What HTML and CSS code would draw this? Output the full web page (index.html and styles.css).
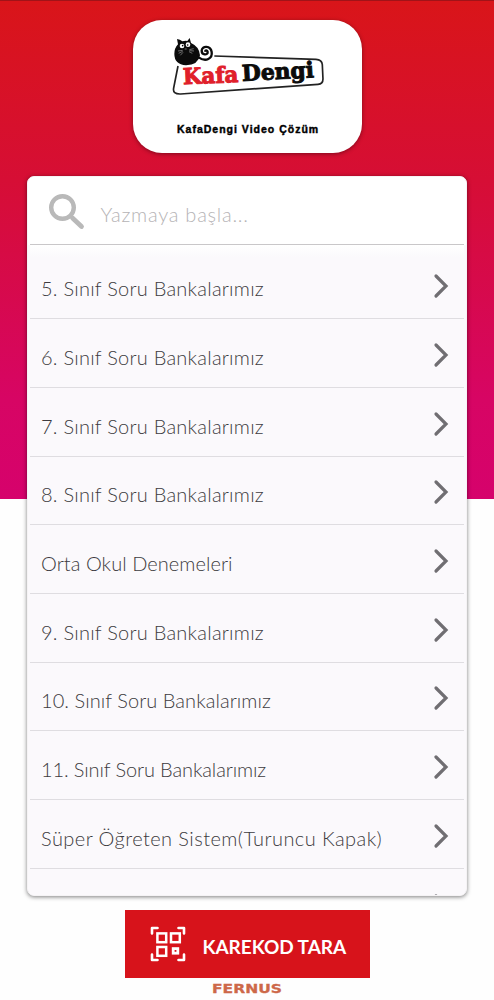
FILE: index.html
```html
<!DOCTYPE html>
<html lang="tr">
<head>
    <meta charset="UTF-8">
    <meta name="viewport" content="width=device-width, initial-scale=1.0">
    <title>KafaDengi Video Çözüm</title>
    <link rel="stylesheet" href="styles.css">
</head>
<body>
    <svg class="hidden">
        <symbol id="arrow" viewBox="0 0 16 26">
            <path d="M3 3 L13 13 L3 23" fill="none" stroke="#706e72" stroke-width="3.2" stroke-linecap="round" stroke-linejoin="miter"/>
        </symbol>
    </svg>

    <div class="logo-card">
        <svg class="logo" viewBox="150 75 470 185">
            <path d="M283 138 L588 148 Q606 149 607 164 L609 207 Q609 222 594 223 L182 252 Q157 253 161 234 L174 168" fill="none" stroke="#222" stroke-width="5"/>
            <!-- cat -->
            <path d="M174 103 L171 87 Q180 88 187 94 Q196 91 202 93 L209 84 L213 99 Q238 110 240 136 Q235 165 198 166 Q163 163 163 132 Q163 114 174 103 Z" fill="#0b0b0b"/>
            <path d="M236 142 C258 158 278 145 275 126 C272 107 246 106 245 122 C245 136 264 136 263 126 C262 120 256 120 255 125" fill="none" stroke="#0b0b0b" stroke-width="7"/>
            <circle cx="186" cy="108" r="7" fill="#fff"/>
            <circle cx="204" cy="104" r="7" fill="#fff"/>
            <circle cx="188" cy="107" r="2.5"/>
            <circle cx="203" cy="105" r="2.5"/>
            <path d="M188 121 L174 123 M188 124 L176 130 M189 127 L181 136 M208 119 L221 116 M208 122 L222 123 M207 125 L217 130 M194 117 L200 117" fill="none" stroke="#ccc" stroke-width="1.5"/>
            <text class="logo-red" x="190" y="223" textLength="166" lengthAdjust="spacingAndGlyphs" transform="rotate(-2.5 190 223)">Kafa</text>
            <text class="logo-black" x="367" y="213" textLength="216" lengthAdjust="spacingAndGlyphs" transform="rotate(-3 367 213)">Dengi</text>
        </svg>
        <div class="logo-title">KafaDengi Video Çözüm</div>
    </div>

    <div class="panel">
        <div class="search">
            <svg class="search-icon" viewBox="0 0 36 36">
                <circle cx="13.5" cy="13.5" r="11.3" fill="none" stroke="#b9b9b9" stroke-width="4.4"/>
                <path d="M23.5 24 L32.5 32.5" stroke="#b9b9b9" stroke-width="4.8" stroke-linecap="round"/>
            </svg>
            <span class="placeholder">Yazmaya başla...</span>
        </div>
        <div class="list">
            <div class="item"><span>5. Sınıf Soru Bankalarımız</span><svg class="arrow"><use href="#arrow"/></svg></div>
            <div class="item"><span>6. Sınıf Soru Bankalarımız</span><svg class="arrow"><use href="#arrow"/></svg></div>
            <div class="item"><span>7. Sınıf Soru Bankalarımız</span><svg class="arrow"><use href="#arrow"/></svg></div>
            <div class="item"><span>8. Sınıf Soru Bankalarımız</span><svg class="arrow"><use href="#arrow"/></svg></div>
            <div class="item tight"><span>Orta Okul Denemeleri</span><svg class="arrow"><use href="#arrow"/></svg></div>
            <div class="item"><span>9. Sınıf Soru Bankalarımız</span><svg class="arrow"><use href="#arrow"/></svg></div>
            <div class="item tight"><span>10. Sınıf Soru Bankalarımız</span><svg class="arrow"><use href="#arrow"/></svg></div>
            <div class="item tighter"><span>11. Sınıf Soru Bankalarımız</span><svg class="arrow"><use href="#arrow"/></svg></div>
            <div class="item wide"><span>Süper Öğreten Sistem(Turuncu Kapak)</span><svg class="arrow"><use href="#arrow"/></svg></div>
            <div class="item next"><svg class="arrow"><use href="#arrow"/></svg></div>
        </div>
    </div>

    <button class="scan">
        <svg class="qr" viewBox="0 0 36 36" fill="none" stroke="#fff">
            <path d="M2 7.5 V2 H7.5 M28.5 2 H34 V7.5 M34 28.5 V34 H28.5 M7.5 34 H2 V28.5" stroke-width="2.6" stroke-linecap="round" stroke-linejoin="round"/>
            <rect x="7.4" y="7.4" width="8.8" height="8.8" stroke-width="2.5"/>
            <rect x="21" y="7.4" width="8.8" height="8.8" stroke-width="2.5"/>
            <rect x="7.4" y="21" width="8.8" height="8.8" stroke-width="2.5"/>
            <rect x="23.2" y="22.6" width="4.6" height="4.6" stroke-width="2.8"/>
        </svg>
        <span>KAREKOD TARA</span>
    </button>
    <div class="brand">
        <svg viewBox="0 0 72 14"><text x="1" y="11.2" textLength="70" lengthAdjust="spacingAndGlyphs">FERNUS</text></svg>
    </div>
</body>
</html>
```

FILE: styles.css
```css
* {
    box-sizing: border-box;
}
body {
    margin: 0;
    height: 1000px;
    overflow: hidden;
    border-top: 1px solid #a11318;
    padding-top: 18px;
    display: flex;
    flex-direction: column;
    align-items: center;
    font-family: Lato, sans-serif;
    background: linear-gradient(#d91519 0, #d60e35 180px, #d70564 400px, #d6026c 499px) no-repeat #fefefe;
    background-size: 100% 499px;
}
.hidden {
    position: absolute;
    width: 0;
    height: 0;
}
.logo-card {
    width: 229px;
    height: 133px;
    flex: none;
    margin-top: 0.5px;
    background: #fff;
    border-radius: 29px;
    padding: 15.5px 0 0 37.5px;
    box-shadow: 0 1px 4px rgba(0, 0, 0, 0.4);
}
.logo {
    display: block;
    width: 156.67px;
    height: 61.67px;
}
.logo text {
    font-family: "DejaVu Serif", serif;
    font-weight: bold;
    font-size: 66px;
    stroke-width: 3;
}
.logo-red {
    fill: #e0202a;
    stroke: #e0202a;
}
.logo-black {
    fill: #0b0b0b;
    stroke: #0b0b0b;
}
.logo-title {
    margin: 25px 0 0 7px;
    font-family: "Liberation Sans", Arial, sans-serif;
    font-size: 10.5px;
    font-weight: bold;
    line-height: 14px;
    letter-spacing: 1px;
    color: #000;
    -webkit-text-stroke: 0.4px #000;
    white-space: nowrap;
}
.panel {
    width: 440px;
    height: 720px;
    flex: none;
    margin-top: 23.5px;
    background: #fbf9fc;
    border: 1px solid #f5f3f5;
    border-radius: 7px;
    box-shadow: 0 1px 4px rgba(0, 0, 0, 0.5);
    overflow: hidden;
}
.search {
    display: flex;
    height: 68px;
    margin: 0 2px;
    padding: 17px 0 0 19px;
    border-bottom: 1px solid #c9c7c9;
    background: #fff;
    box-shadow: 0 0 0 2px #fff;
    clip-path: inset(0 -3px);
}
.search-icon {
    width: 36px;
    height: 36px;
}
.placeholder {
    margin: 8px 0 0 15.5px;
    font-size: 20px;
    line-height: 24px;
    font-weight: 300;
    letter-spacing: 0.75px;
    color: #b5b3b5;
}
.list {
    margin: 0 2px;
    padding-top: 5.8px;
    background: linear-gradient(#fff, #fbf9fc 12px);
}
.item {
    display: flex;
    justify-content: space-between;
    height: 68.65px;
    padding: 0 15px 0 11px;
    border-bottom: 1px solid #dfdde1;
    font-size: 20px;
    font-weight: 300;
    line-height: 24px;
    letter-spacing: 0.24px;
    color: #3d3b40;
}
.item span {
    margin-top: 25.6px;
    white-space: nowrap;
}
.item.tight {
    letter-spacing: 0.06px;
}
.item.tighter {
    letter-spacing: -0.12px;
}
.item.wide {
    letter-spacing: 0.43px;
}
.arrow {
    width: 16px;
    height: 26px;
    margin-top: 22.6px;
}
.item.next {
    justify-content: flex-end;
    border-bottom: none;
}
.item.next .arrow {
    margin-top: 24px;
}
.scan {
    display: flex;
    flex: none;
    align-items: center;
    width: 245px;
    height: 68px;
    margin-top: 14px;
    padding: 0 0 0 25px;
    border: none;
    background: #d7131b;
    color: #fff;
    font-family: Lato, sans-serif;
    font-size: 19px;
    font-weight: bold;
}
.scan span {
    margin: 5px 0 0 17px;
    letter-spacing: -0.05px;
    white-space: nowrap;
}
.qr {
    width: 36px;
    height: 36px;
}
.brand {
    margin-top: 4px;
}
.brand svg {
    display: block;
    width: 72px;
    height: 14px;
}
.brand text {
    font-family: "DejaVu Sans", sans-serif;
    font-size: 13px;
    font-weight: bold;
    fill: #cd6849;
    stroke: #cd6849;
    stroke-width: 0.3;
}
```
